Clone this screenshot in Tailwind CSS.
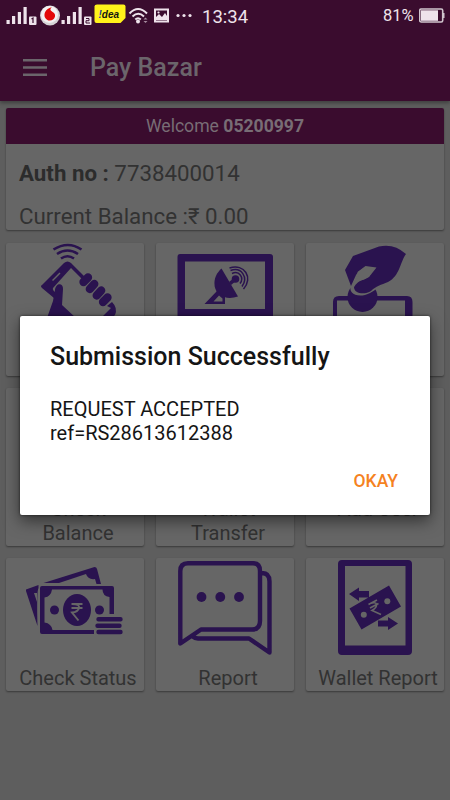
<!DOCTYPE html>
<html lang="en">
<head>
<meta charset="utf-8">
<title>Pay Bazar</title>
<script src="https://cdn.jsdelivr.net/npm/@tailwindcss/browser@4"></script>
</head>
<body class="w-[450px] h-[800px] overflow-hidden bg-[#5e5e5e] font-[Roboto,'Noto_Sans',sans-serif] relative text-[#323232]">

<header class="h-[101px] bg-[#3a0c2e] shadow-[0_2px_4px_rgba(0,0,0,0.35)] flex flex-col">
  <div class="h-[34px] flex items-center text-[#eee3eb]">
    <svg class="w-[200px] h-[34px] shrink-0" viewBox="0 0 200 34" fill="#eee3eb">
      <g id="bars">
        <rect x="6.500" y="20" width="3.200" height="4"/><rect x="12" y="16" width="3.200" height="8"/><rect x="17.800" y="12" width="3.200" height="12"/><rect x="23.500" y="7" width="3.200" height="17"/>
        <rect x="29" y="16.500" width="7.500" height="8.500" rx="1"/>
      </g>
      <path d="M31.500 19l1.500-1v5" stroke="#3a0c2e" stroke-width="1.200" fill="none"/>
      <circle cx="50" cy="15.500" r="10" fill="#d5d3d5"/><circle cx="49.500" cy="14.500" r="8.500" fill="#f3f1f2"/>
      <path d="M52 7C45 9 43.500 14 45 17.500c2 4.500 9 4 10-1 .8-4-3.500-4.500-4.500-6.500-.3-1 .3-2 1.500-3z" fill="#e30808"/>
      <use href="#bars" x="55"/>
      <path d="M86 18.500h3v2.200h-3V23h4" stroke="#3a0c2e" fill="none"/>
      <path d="M97 4.500h26.500q2 0 2 2V18l-5 5H96.500q-2 0-2-2V6.500q0-2 2.500-2z" fill="#fff21a"/>
      <text x="98.500" y="17.500" font-family="Liberation Sans, sans-serif" font-size="10.500" font-weight="bold" font-style="italic" fill="#151510" textLength="20.500" lengthAdjust="spacingAndGlyphs"><tspan fill="#23379b">!</tspan>dea</text>
      <g fill="none" stroke="#eee3eb" stroke-width="2"><path d="M129.500 13.500q8.500-9 17.500 0M132.500 16.500q5.700-5.500 11.500 0M135.300 19.500q2.700-2.500 5.500 0"/></g>
      <circle cx="138" cy="21.500" r="2"/><path d="M143.500 19.500l2-2 2 2zM143.500 21l2 2 2-2z" opacity=".6"/>
      <path fill-rule="evenodd" d="M154 8.500h15v14h-15zM156 10.500v10h11v-10z"/><path d="M156 20v-3l3-3 3 3 3-4 2 3v4z"/><circle cx="158.500" cy="12.500" r="1.100"/>
      <circle cx="178" cy="15.500" r="1.600"/><circle cx="184" cy="15.500" r="1.600"/><circle cx="190" cy="15.500" r="1.600"/>
    </svg>
    <span class="text-[18.500px] leading-[34px] w-[182px] pl-[2px]">13:34</span>
    <span class="text-[16.500px] leading-[30px] pb-[2px] w-[37px] pl-px shrink-0">81%</span>
    <svg class="w-[31px] h-[34px] shrink-0" viewBox="419 0 31 34"><rect x="419.700" y="9" width="23" height="13" rx="1.500" fill="none" stroke="#d0c5cd" stroke-width="1.600"/><rect x="421" y="10.300" width="17" height="10.500" fill="#eee3eb"/><rect x="443" y="13" width="1.500" height="5" fill="#d0c5cd"/></svg>
  </div>
  <div class="h-[67px] flex items-center pl-[23px] gap-[43px]">
    <svg class="w-6 h-[17px] -mt-px" viewBox="0 0 24 17" fill="#6b656b"><path d="M0 0h24v2.500H0zM0 7.200h24v2.500H0zM0 14.400h24v2.500H0z"/></svg>
    <h1 class="text-[25px] leading-[30px] pt-px font-medium text-[#6b656b]">Pay Bazar</h1>
  </div>
</header>

<main class="px-[6px] pt-[7px]">
  <section class="h-[122px] bg-[#666] rounded-[2px] shadow-[0_1px_2px_rgba(0,0,0,0.4)] overflow-hidden">
    <div class="h-[36px] bg-[#3a0c2e] text-center text-[17.600px] leading-[37px] text-[#786d75]">Welcome <b>05200997</b></div>
    <div class="px-[13px] pt-[8px] text-[22.300px] leading-[43px]">
      <p><b class="text-[#2c2c2c]">Auth no :</b> 7738400014</p>
      <p>Current Balance :₹ 0.00</p>
    </div>
  </section>

  <section class="mt-[13px] grid grid-cols-3 gap-x-[12px] gap-y-[12px] grid-rows-[133px_158px_133px] text-[20px] leading-[24px] text-center whitespace-nowrap">
    <div class="bg-[#666] rounded-[2px] shadow-[0_1px_2px_rgba(0,0,0,0.4)]">
      <svg class="w-full h-[110px]" viewBox="6 243 138 110" fill="#2a134f">
        <g fill="none" stroke="#2a134f" stroke-width="2.600"><path d="M53.500 249.500q14.500-9 28 0M57 254q10.500-7 21 0M61 258.500q6.500-4.500 13 0"/></g>
        <path fill-rule="evenodd" d="M42 285l22-22q3.500-3 7 0L85 277l-2.500 2.500L71 268l-18 20q-1 2 3 5l-2 5-12-10q-2-2 0-3zM52 280l1 1 7.500-7.500-1-1z"/>
        <path d="M55 290c1-8 8.500-7 8-1l-1 16 14 13H47l6-17z"/>
        <g stroke="#2a134f" stroke-width="8.300" stroke-linecap="round"><path d="M83.500 282l4.500-4.500M89.800 289l4.500-5M96.700 295.500l4.500-5M103 302l4.500-4.500"/></g>
        <path d="M107 306l5-4q6 6 3 13l-5 5H99l12-12z"/>
      </svg>
    </div>
    <div class="bg-[#666] rounded-[2px] shadow-[0_1px_2px_rgba(0,0,0,0.4)]">
      <svg class="w-full h-[110px]" viewBox="156 243 138 110" fill="#2a134f">
        <path fill-rule="evenodd" d="M180 254h90q3 0 3 3v62h-95.500v-62q0-3 2.500-3zM185 261.500V309h80v-47.500z"/>
        <path d="M221.500 268.500L238 296.500c-12 4-21.500-1-23.300-10-1.300-8 2.300-14 6.800-18z"/>
        <circle cx="235.500" cy="279" r="3.800"/><path d="M229 282l5-4 2 3-5 4z"/>
        <path fill-rule="evenodd" d="M217 291l-12.500 13H225v-7zM219 295.500l3.500 3v3h-9z"/>
        <g fill="none" stroke="#2a134f" stroke-width="1.500"><path d="M232 273.500c7-3.500 12.500 4 8 10M230.500 270.500c11-4 18 7 11.500 16M229.500 268c15-5 24 10 14 21"/></g>
      </svg>
    </div>
    <div class="bg-[#666] rounded-[2px] shadow-[0_1px_2px_rgba(0,0,0,0.4)]">
      <svg class="w-full h-[110px]" viewBox="306 243 138 110" fill="#2a134f">
        <path fill-rule="evenodd" d="M339 296h68q5.500 0 5.500 6v18H333v-18q0-6 6-6zM337 300.500V318h68v-17.500z"/>
        <circle cx="362.500" cy="297" r="15"/>
        <path d="M351 284c-3 9 4 13 14 11 8-2 10-7 20-10l-6-16-20 4z" fill="#666"/>
        <path d="M351 286l-6-16 8-14 26-9.500q15-3.500 27 7.500c-6 8-6 22-18 28-7 3-12 4-17 9-6 4-17 3-17-4 0-6 10-7 15-10l5-9-9-1-7 5-2 3z"/>
        <path d="M376.500 267.500l-11-1.500-8 6 1 4q-3 6-6.500 9l2 2q3-5 7-6.500 7-2 10-6z" fill="#666"/>
      </svg>
    </div>

    <div class="bg-[#666] rounded-[2px] shadow-[0_1px_2px_rgba(0,0,0,0.4)] flex flex-col justify-end pl-[6px] pb-px"><p>Check<br>Balance</p></div>
    <div class="bg-[#666] rounded-[2px] shadow-[0_1px_2px_rgba(0,0,0,0.4)] flex flex-col justify-end pl-[6px] pb-px"><p>Wallet<br>Transfer</p></div>
    <div class="bg-[#666] rounded-[2px] shadow-[0_1px_2px_rgba(0,0,0,0.4)] flex flex-col justify-end pl-[6px] pb-[25px]"><p>Add User</p></div>

    <div class="bg-[#666] rounded-[2px] shadow-[0_1px_2px_rgba(0,0,0,0.4)]">
      <svg class="w-full h-[108px]" viewBox="6 558 138 108" fill="#2a134f">
        <path d="M43.500 583l51-16q2 0 2.500 2l4 15h-4.500l-1.500-5q-7 1-9-5l-27 9z"/>
        <path d="M26 589.500L38.500 585v3q-2 3-1 38L26 591zM34 593l3 9v-9z"/>
        <path fill-rule="evenodd" d="M42 586h70q2 0 2 2v26h-4.500v-17q-7-1-7-7.500H52q-1 7-7.500 8v25q7 1 8 7.500H94v4H42q-2 0-2-2v-44q0-2 2-2z"/>
        <ellipse cx="77" cy="610" rx="14" ry="16"/><circle cx="54.500" cy="610" r="4.500"/><circle cx="99.500" cy="610" r="4.500"/>
        <path d="M71.500 604h11M71.500 608h11M72 604q8 0 7 4t-7 4.500l6.500 8" fill="none" stroke="#666" stroke-width="1.900"/>
        <g stroke="#2a134f" stroke-width="4.400" stroke-linecap="round"><path d="M98.500 619.300h22M97.500 625.700h22M98.500 632h22"/></g>
      </svg>
      <p class="pl-[6px]">Check Status</p>
    </div>
    <div class="bg-[#666] rounded-[2px] shadow-[0_1px_2px_rgba(0,0,0,0.4)]">
      <svg class="w-full h-[108px]" viewBox="156 558 138 108" fill="#2a134f">
        <g fill="none" stroke="#2a134f" stroke-width="4.400" stroke-linejoin="round"><path d="M180.300 643.500V571q0-7.800 7.700-7.800h65q7 0 7 7.800v50q0 8.500-8 8.500h-51zM262 573q7.500 0 7.500 8.500v71L249 638.500h-51q-3 0-6-2.500"/></g>
        <circle cx="201.500" cy="597" r="4.900"/><circle cx="220.300" cy="597" r="4.900"/><circle cx="239" cy="597" r="4.900"/>
      </svg>
      <p class="pl-[6px]">Report</p>
    </div>
    <div class="bg-[#666] rounded-[2px] shadow-[0_1px_2px_rgba(0,0,0,0.4)]">
      <svg class="w-full h-[108px]" viewBox="306 558 138 108" fill="#2a134f">
        <path fill-rule="evenodd" d="M342 560h66q4 0 4 4v87q0 4-4 4h-66q-4 0-4-4v-87q0-4 4-4zM345 566v79.500h60.500V566z"/>
        <path d="M349.500 608.500L389 585.500l12 21-39.500 23zM349 594l10-6.500v3.500h10v6.500h-10v3.500zM398 623.500l-10-6.500v3.500h-10v6h10v3.500z"/>
        <circle cx="363.800" cy="614.800" r="3" fill="#666"/><circle cx="387.300" cy="601.300" r="3" fill="#666"/>
        <path d="M368.500 604.500l8.500-4.500M370 608l8.500-4.500M370 603.500q6-2 6.500 1t-4.500 6l9 4" fill="none" stroke="#666" stroke-width="1.700"/>
      </svg>
      <p class="pl-[6px]">Wallet Report</p>
    </div>
  </section>
</main>

<div role="dialog" class="absolute left-[20px] top-[316px] w-[410px] h-[199px] bg-white rounded-[2px] shadow-[0_6px_16px_rgba(0,0,0,0.5),0_0_3px_rgba(0,0,0,0.6)] px-[30px] pt-[25px] text-[#151515] flex flex-col">
  <h2 class="text-[25px] leading-[32px] font-medium">Submission Successfully</h2>
  <p class="mt-[24px] text-[20px] leading-[24px]">REQUEST ACCEPTED<br>ref=RS28613612388</p>
  <button class="mt-[24px] self-end mr-[2px] text-[17.500px] leading-[24px] font-medium text-[#f5821f]">OKAY</button>
</div>
</body>
</html>
